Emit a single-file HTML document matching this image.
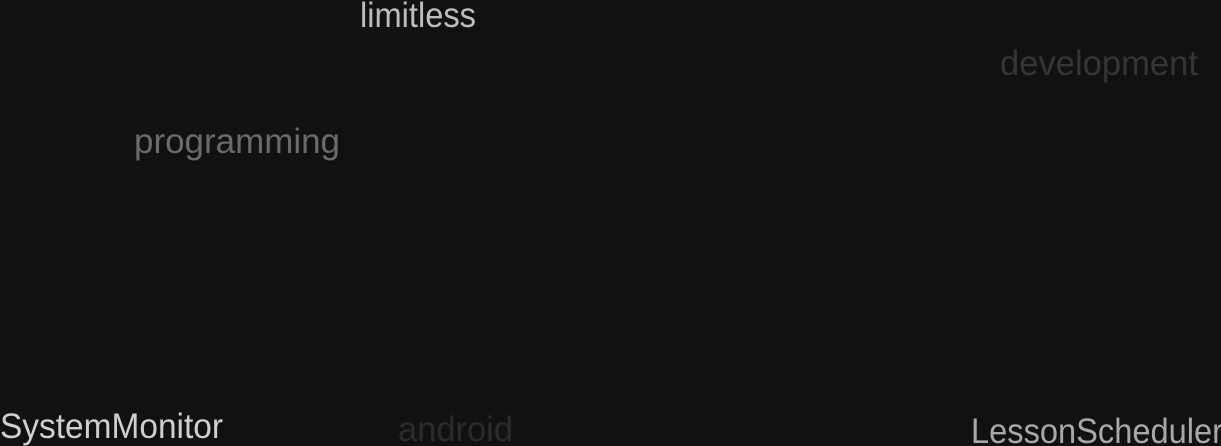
<!DOCTYPE html>
<html><head><meta charset="utf-8"><style>
html,body{margin:0;padding:0;background:#111111;width:1221px;height:446px;overflow:hidden}
svg{display:block}
text{font-family:"Liberation Sans","DejaVu Sans",sans-serif;font-size:35px}
</style></head><body>
<svg width="1221" height="446" viewBox="0 0 1221 446">
<rect width="1221" height="446" fill="#111111"/>
<text x="360" y="27" fill="#bdbdbd" textLength="116" lengthAdjust="spacingAndGlyphs">limitless</text>
<text x="1000" y="75" fill="#353535" textLength="198" lengthAdjust="spacingAndGlyphs">development</text>
<text x="134" y="153" fill="#6a6a6a" textLength="206" lengthAdjust="spacingAndGlyphs">programming</text>
<text x="0" y="438" fill="#cfcfcf" textLength="223" lengthAdjust="spacingAndGlyphs">SystemMonitor</text>
<text x="398" y="441" fill="#2b2b2b" textLength="115" lengthAdjust="spacingAndGlyphs">android</text>
<text x="971" y="443" fill="#a8a8a8" textLength="252" lengthAdjust="spacingAndGlyphs">LessonScheduler</text>
</svg>
</body></html>
